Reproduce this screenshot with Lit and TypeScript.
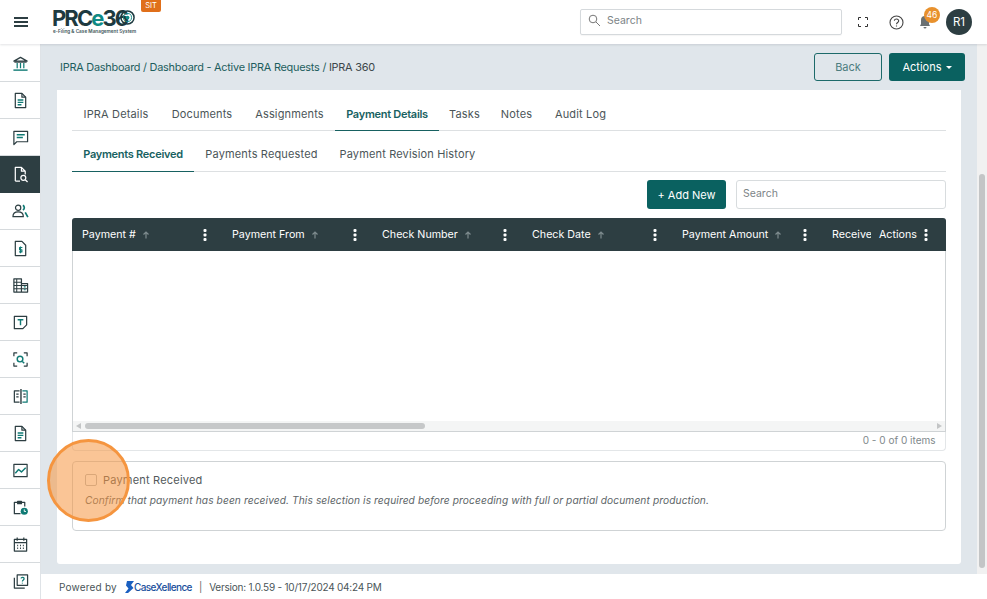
import { LitElement, html, css, svg } from "lit";
import { customElement } from "lit/decorators.js";
import { styleMap } from "lit/directives/style-map.js";

const D = "#2d3e42";
const T = "#0f7a74";
const i = (body: unknown) => html`<svg class="ic" viewBox="0 0 18 18" fill="none" stroke="${D}" stroke-width="1.3" stroke-linejoin="round">${body}</svg>`;
const docLines = svg`<path d="M3.5 1.5h7l4 4v11h-11z"/><path d="M10.5 1.5v4h4"/><path d="M6 8.5h6M6 11h6M6 13.5h4" stroke="${T}" stroke-width="1.4"/>`;

const icons = [
  i(svg`<path d="M2 6.5 9 2.5l7 4z"/><path d="M5.5 8.5v5.5M9 8.5v5.5M12.5 8.5v5.5" stroke="${T}"/><path d="M1.5 16h15" stroke="${T}" stroke-width="1.5"/><path d="M2.500 7.500h13"/>`),
  i(docLines),
  i(svg`<path d="M2 2.500h14.500v11H5l-3 3z"/><path d="M5 6h8.500M5 9h6.500" stroke="${T}" stroke-width="1.5"/>`),
  i(svg`<path d="M3.500 16V1.500h6.500l4 4v3.500M10 1.500v4h4M3.500 16h5" stroke="#fff"/><circle cx="12" cy="12.500" r="2.600" stroke="#fff"/><path d="m14 14.500 2.500 2.500" stroke="#fff"/>`),
  i(svg`<circle cx="6.500" cy="5" r="2.800"/><path d="M1 14.500c0-3.500 2.500-5 5.500-5s5.500 1.500 5.500 5z"/><path d="M11.500 2.500a2.800 2.800 0 0 1 0 5M14 10l2.800 5" stroke="${T}" stroke-width="1.800"/>`),
  i(svg`<path d="M3.500 1.500h7l4 4v11h-11z"/><path d="M11 8H8v2.300h2.500v2.300H7.500M9 7v7" stroke="${T}" stroke-width="1.200"/>`),
  i(svg`<path d="M2 2h8v14H2zM10 7h6.500v9H10z"/><path d="M2 5.500h8M2 9h14M2 12.500h14M5 2v14" stroke-width="1.100"/><path d="M12.500 10.500h2M12.500 13.500h2" stroke="${T}"/>`),
  i(svg`<path d="M2.500 2.500h13v9l-4 4h-9z"/><path d="M6 6h6M9 6v6" stroke="${T}" stroke-width="1.500"/>`),
  i(svg`<path d="M2 5.500V2h3.500M12.500 2H16v3.500M16 12.500V16h-3.500M5.500 16H2v-3.500"/><circle cx="8.500" cy="8.500" r="3" stroke="${T}" stroke-width="1.500"/><path d="m11 11 2 2" stroke="${T}" stroke-width="1.500"/>`),
  i(svg`<path d="M8 3H2.500v12H8" /><path d="M9.500 1v16" stroke-width="1.500"/><path d="M4.500 6.500H7M4.500 9.500H7M12 6.500h2.500M12 9.500h2.500" /><path d="M11 3h5v12h-5" stroke="${T}"/>`),
  i(docLines),
  i(svg`<path d="M2 2.500h14v13H2z"/><path d="m3.500 12 3.500-4 3 2.500 4.500-4.500" stroke="${T}" stroke-width="1.500"/>`),
  i(svg`<path d="M9 15.500H2.500V3.500h11V8"/><path d="M6 2.500h4v2.500H6z" fill="${D}"/><circle cx="13" cy="13" r="3.800" fill="${T}" stroke="none"/><path d="M13 11v2.200h1.800" stroke="#fff" stroke-width="1"/>`),
  i(svg`<path d="M2.500 3.500h13v12.500h-13zM2.500 7h13"/><path d="M5.500 1.500v3.500M12.500 1.500v3.500" /><path d="M5.500 10h1M8.500 10h1M11.500 10h1M5.500 13h1M8.500 13h1M11.500 13h1" stroke-width="1.500"/>`),
  i(svg`<path d="M5.500 2h11v11h-11z"/><path d="M2.500 5v11h11" /><path d="M9.500 5.800c.4-1.800 3.500-1.600 3.300.4-.1 1.200-1.800 1.300-1.800 2.800M11 10.200v1" stroke="${T}"/>`),
];

const cols = ["Payment #", "Payment From", "Check Number", "Check Date", "Payment Amount"];
const dots = html`<svg class="dots" viewBox="0 0 4 12" fill="#fff"><rect x="0.500" y="0" width="3" height="3" rx="1"/><rect x="0.500" y="4.500" width="3" height="3" rx="1"/><rect x="0.500" y="9" width="3" height="3" rx="1"/></svg>`;
const arrow = html`<svg class="up" viewBox="0 0 8 8" fill="none" stroke="#7d8b8e" stroke-width="1.200"><path d="M4 7.500V1M1.500 3.500 4 1l2.500 2.500"/></svg>`;

const mainTabs: [string, number][] = [["IPRA Details", 88], ["Documents", 84], ["Assignments", 91], ["Payment Details", 104], ["Tasks", 51], ["Notes", 53], ["Audit Log", 75]];
const subTabs: [string, number][] = [["Payments Received", 122], ["Payments Requested", 135], ["Payment Revision History", 157]];
const tab = ([t, w]: [string, number], on: string) =>
  html`<div class="tab ${t === on ? "on" : ""}" style=${styleMap({ width: `${w}px` })}>${t}</div>`;

@customElement("app-root")
export class AppRoot extends LitElement {
  static styles = css`
    :host { display: block; width: 987px; height: 599px; overflow: hidden; position: relative;
      font-family: Inter, "Liberation Sans", sans-serif; font-size: 11px; color: #4a5558; background: #e0e6eb; }
    * { box-sizing: border-box; }
    .app { display: flex; flex-direction: column; height: 599px; }
    header { height: 44px; flex: none; background: #fff; display: flex; align-items: center; position: relative; z-index: 2;
      box-shadow: 0 1px 2px rgba(60,70,80,.15); }
    .burger { width: 14px; height: 10px; margin: 0 25px 0 14px; flex: none; }
    .logo { width: 82px; height: 44px; display: flex; flex-direction: column; flex: none; padding-top: 7px; position: relative; }
    .logo b { font: 700 22px/22px Inter, sans-serif; color: #1e3a40; letter-spacing: -1.9px; white-space: nowrap; margin-left: -1px; }
    .logo b i { font-style: normal; color: #0f8a84; }
    .logo small { font: 600 4.7px/6px Inter, sans-serif; color: #40565a; white-space: nowrap; margin-top: -1px; }
    .ring { position: absolute; left: 67px; top: 10px; width: 15px; height: 15px; }
    .sit { align-self: flex-start; margin-left: 6px; width: 20px; height: 12px; flex: none; background: #e06f1a; color: #fff; font-size: 7.5px; line-height: 11px; text-align: center; border-radius: 0 0 2px 2px; }
    .hsearch { margin-left: 419px; width: 262px; height: 26px; flex: none; border: 1px solid #d5d9dc; border-radius: 2px; display: flex; align-items: center; padding: 0 0 3px 7px; color: #7c8487; font-size: 10.5px; gap: 6px; box-shadow: 0 1px 1px rgba(0,0,0,.04); }
    .hsearch svg { width: 13px; height: 13px; }
    .hicons { display: flex; align-items: center; flex: none; }
    .full { width: 10px; height: 10px; margin-left: 16px; }
    .help { width: 15px; height: 15px; margin-left: 21px; }
    .bell { margin-left: 14px; width: 14px; height: 14px; }
    .badge { position: absolute; left: 924px; top: 7px; width: 16px; height: 16px; border-radius: 50%; background: #e8912d; color: #fff; font-size: 8.5px; line-height: 16px; text-align: center; }
    .avatar { width: 26px; height: 26px; margin-left: 14px; border-radius: 50%; background: #2d3e42; color: #fff; font-size: 11.5px; line-height: 26px; text-align: center; flex: none; }
    .body { flex: 1; display: flex; min-height: 0; }
    nav { width: 41px; flex: none; background: #fff; border-right: 1px solid #dfe3e7; padding-top: 1px; }
    .ni { height: 37px; display: flex; align-items: center; justify-content: center; border-bottom: 1px solid #d6dadd; }
    .ni.on { background: #2d3e42; border-bottom-color: #2d3e42; }
    .ic { width: 17px; height: 17px; display: block; }
    .right { flex: 1; display: flex; flex-direction: column; min-width: 0; }
    .mid { flex: 1; display: flex; min-height: 0; }
    main { flex: 1; padding: 9px 12px 10px 16px; display: flex; flex-direction: column; min-width: 0; }
    .crumbbar { height: 28px; flex: none; display: flex; align-items: center; padding-left: 3px; gap: 7px; margin-bottom: 9px; }
    .crumb { flex: 1; color: #1d5e5e; font-size: 10.9px; letter-spacing: -.24px; }
    .crumb span { color: #3c474a; }
    .btn { height: 28px; border-radius: 3px; font-size: 11px; display: flex; align-items: center; justify-content: center; }
    .back { width: 68px; border: 1px solid #1d6a6a; color: #4d7d80; }
    .act { width: 76px; background: #0a6160; color: #fff; gap: 4px; }
    .act::after { content: ""; border: 3.5px solid transparent; border-top-color: #fff; border-bottom: 0; }
    .card { flex: 1; background: #fff; border-radius: 0 0 3px 3px; padding: 10px 15px 0 15px; min-height: 0; margin-right: 4px; }
    .tabs { display: flex; height: 31px; border-bottom: 1px solid #dde0e2; }
    .tab { height: 31px; line-height: 28px; text-align: center; color: #4b5558; font-size: 11px; white-space: nowrap; letter-spacing: .15px; flex: none; }
    .tab.on { color: #176161; font-weight: 600; border-bottom: 1px solid #176161; letter-spacing: -.28px; }
    .sub { height: 41px; }
    .sub .tab { height: 41px; line-height: 46px; }
    .tools { display: flex; justify-content: flex-end; gap: 10px; margin-top: 8px; height: 29px; }
    .add { width: 79px; height: 29px; background: #0a6160; color: #fff; }
    .tsearch { width: 210px; border: 1px solid #d8dcde; border-radius: 3px; color: #7c8487; font-size: 10.5px; padding: 0 6px; line-height: 25px; }
    .grid { margin-top: 9px; height: 214px; border: 1px solid #cfd3d5; border-top: 0; border-radius: 4px 4px 0 0; }
    .thead { height: 33px; background: #2d3e42; color: #fff; display: flex; border-radius: 3px 3px 0 0; font-size: 10.7px; margin: 0 -1px; }
    .th { width: 150px; flex: none; display: flex; align-items: center; padding-left: 10px; white-space: nowrap; }
    .th .up { width: 8px; height: 8px; margin-left: 6px; }
    .th .dots { width: 4px; height: 12px; margin-left: auto; margin-right: 15.5px; }
    .th.clip { width: 49px; overflow: hidden; }
    .th.last { width: 75px; padding-left: 8px; }
    .th.last .dots { margin-right: 18px; }
    .empty { height: 170px; }
    .hbar { height: 10px; background: #f4f5f5; position: relative; display: flex; align-items: center; padding: 0 3px; }
    .hbar .thumb { position: absolute; left: 12px; width: 340px; height: 6px; border-radius: 3px; background: #c6c8c9; }
    .tl { width: 0; height: 0; border: 3.5px solid transparent; border-right: 5px solid #c3c5c6; border-left: 0; }
    .tr { margin-left: auto; width: 0; height: 0; border: 3.5px solid transparent; border-left: 5px solid #c3c5c6; border-right: 0; }
    .pager { height: 19px; border: 1px solid #e3e6e8; border-top: 0; border-radius: 0 0 4px 4px; text-align: right; padding-right: 9.5px; line-height: 17px; color: #80888b; font-size: 10px; }
    .panel { margin-top: 10px; height: 70px; border: 1px solid #cfd3d5; border-radius: 4px; padding: 11px 12px; }
    .chk { display: flex; align-items: center; gap: 6px; font-size: 11px; letter-spacing: .2px; color: #53595b; height: 14px; }
    .box { width: 12px; height: 12px; border: 1px solid #b9bdbf; border-radius: 2px; flex: none; }
    .hint { margin-top: 6px; font-style: italic; font-size: 10.2px; letter-spacing: .1px; color: #5d6568; line-height: 14px; white-space: nowrap; }
    .sb { width: 10px; flex: none; background: #f1f1f1; display: flex; justify-content: center; padding-top: 130px; padding-bottom: 6px; }
    .sb div { width: 6px; height: 100%; border-radius: 3px; background: #c3c5c6; }
    footer { height: 25px; flex: none; background: #fff; padding-left: 18px; display: flex; align-items: center; font-size: 10px; color: #4a5558; white-space: nowrap; }
    .pw { letter-spacing: .2px; }
    .cx { display: flex; align-items: center; margin: 0 7px 0 8px; color: #1a4f9c; font-weight: 500; font-size: 10px; letter-spacing: -.6px; }
    .cx svg { width: 9px; height: 12px; margin-right: 0; }
    .sep { color: #666; }
    .ver { margin-left: 7px; letter-spacing: -.22px; }
    .spot { position: absolute; left: 47px; top: 439px; width: 83px; height: 83px; border-radius: 50%; background: rgba(245,149,63,.55); border: 3px solid #f5953f; }
  `;

  render() {
    return html`<div class="app">
      <header>
        <svg class="burger" viewBox="0 0 14 10" fill="${D}"><rect width="14" height="2"/><rect y="4" width="14" height="2"/><rect y="8" width="14" height="2"/></svg>
        <div class="logo"><b>PRC<i>e</i>36</b>
          <svg class="ring" viewBox="0 0 16 16" fill="none"><circle cx="8" cy="8" r="7" stroke="#1e3a40" stroke-width="1.600"/><circle cx="8" cy="8" r="4.300" stroke="#0f8a84" stroke-width="1"/><circle cx="8" cy="8" r="2" fill="#0f8a84"/></svg>
          <small>e-Filing &amp; Case Management System</small></div>
        <div class="sit">SIT</div>
        <div class="hsearch"><svg viewBox="0 0 13 13" fill="none" stroke="#777" stroke-width="1"><circle cx="5" cy="5" r="3.8"/><path d="m8 8 4 4"/></svg>Search</div>
        <div class="hicons">
          <svg class="full" viewBox="0 0 10 10" fill="none" stroke="#333" stroke-width="1"><path d="M.5 3V.5H3M7 .5h2.500V3M9.500 7v2.500H7M3 9.500H.5V7"/></svg>
          <svg class="help" viewBox="0 0 15 15" fill="none" stroke="#444" stroke-width="1.1"><circle cx="7.5" cy="7.5" r="6.5"/><path d="M5.300 5.800c.3-2.400 4.500-2.300 4.400.2-.1 1.500-2.200 1.500-2.200 3.200M7.500 10.500v1"/></svg>
          <svg class="bell" viewBox="0 0 14 14" fill="#6b7173"><path d="M7 1a4 4 0 0 0-4 4v4L2 11h10l-1-2V5a4 4 0 0 0-4-4zM5.500 12a1.500 1.500 0 0 0 3 0z"/></svg>
          <div class="avatar">R1</div>
        </div>
        <div class="badge">46</div>
      </header>
      <div class="body">
        <nav>${icons.map((ic, n) => html`<div class="ni ${n === 3 ? "on" : ""}">${ic}</div>`)}</nav>
        <div class="right">
          <div class="mid">
            <main>
              <div class="crumbbar">
                <div class="crumb">IPRA Dashboard / Dashboard - Active IPRA Requests / <span>IPRA 360</span></div>
                <div class="btn back">Back</div>
                <div class="btn act">Actions</div>
              </div>
              <div class="card">
                <div class="tabs">${mainTabs.map((t) => tab(t, "Payment Details"))}</div>
                <div class="tabs sub">${subTabs.map((t) => tab(t, "Payments Received"))}</div>
                <div class="tools">
                  <div class="btn add">+ Add New</div>
                  <div class="tsearch">Search</div>
                </div>
                <div class="grid">
                  <div class="thead">
                    ${cols.map((c) => html`<div class="th">${c}${arrow}${dots}</div>`)}
                    <div class="th clip">Receive</div>
                    <div class="th last">Actions${dots}</div>
                  </div>
                  <div class="empty"></div>
                  <div class="hbar"><div class="tl"></div><div class="thumb"></div><div class="tr"></div></div>
                </div>
                <div class="pager">0 - 0 of 0 items</div>
                <div class="panel">
                  <div class="chk"><div class="box"></div>Payment Received</div>
                  <div class="hint">Confirm that payment has been received. This selection is required before proceeding with full or partial document production.</div>
                </div>
              </div>
            </main>
            <div class="sb"><div></div></div>
          </div>
          <footer><span class="pw">Powered by</span>
            <span class="cx"><svg viewBox="0 0 9 12" fill="#1a5fc0"><path d="M2 0h7L6 4l2.500 3L3 12H0l3.500-4.500L1 4.500z"/></svg>CaseXellence</span><span class="sep">|</span>
            <span class="ver">Version: 1.0.59 - 10/17/2024 04:24 PM</span>
          </footer>
        </div>
      </div>
      <div class="spot"></div>
    </div>`;
  }
}
